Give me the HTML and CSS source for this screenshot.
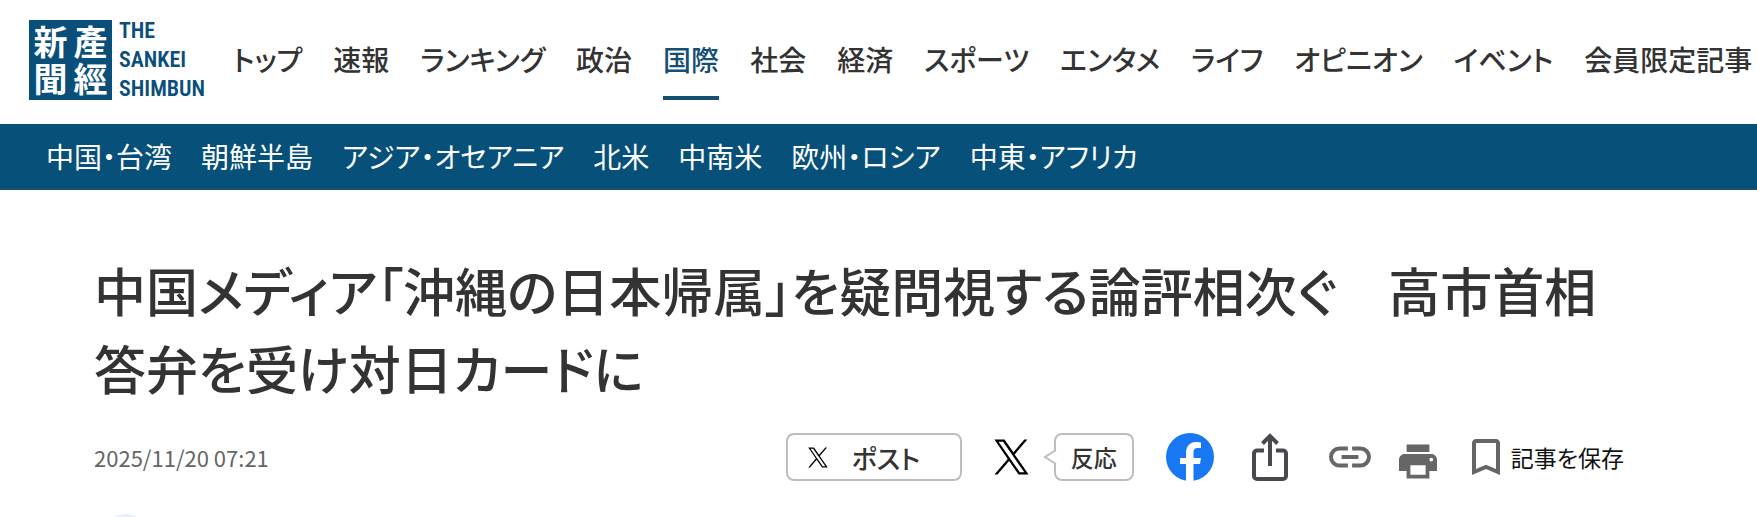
FILE: index.html
```
<!DOCTYPE html>
<html lang="ja">
<head>
<meta charset="utf-8">
<meta name="viewport" content="width=device-width, initial-scale=1">
<title>産経ニュース</title>
<link rel="stylesheet" href="styles.css">
</head>
<body>
<header class="header">
  <a class="logo" href="#">
    <span class="logo-seal"><span>產經</span><span>新聞</span></span>
    <span class="logo-name"><span>THE</span><span>SANKEI</span><span>SHIMBUN</span></span>
  </a>
  <nav class="nav">
    <a href="#">トップ</a>
    <a href="#">速報</a>
    <a href="#">ランキング</a>
    <a href="#">政治</a>
    <a class="current" href="#">国際</a>
    <a href="#">社会</a>
    <a href="#">経済</a>
    <a href="#">スポーツ</a>
    <a href="#">エンタメ</a>
    <a href="#">ライフ</a>
    <a href="#">オピニオン</a>
    <a href="#">イベント</a>
    <a href="#">会員限定記事</a>
  </nav>
</header>
<nav class="subnav">
  <a href="#">中国・台湾</a>
  <a href="#">朝鮮半島</a>
  <a href="#">アジア・オセアニア</a>
  <a href="#">北米</a>
  <a href="#">中南米</a>
  <a href="#">欧州・ロシア</a>
  <a href="#">中東・アフリカ</a>
</nav>
<main class="article">
  <h1 class="title">中国メディア「沖縄の日本帰属」を疑問視する論評相次ぐ　高市首相答弁を受け対日カードに</h1>
  <div class="meta">
    <time class="date" datetime="2025-11-20T07:21">2025/11/20 07:21</time>
    <div class="actions">
      <button class="post" type="button">
        <svg class="x-small" viewBox="0 0 24 24"><path d="M14.2 10.2 22.9 0h-2.1l-7.5 8.8L7.2 0H.3l9.1 13.3L.3 24h2.1l8-9.3 6.4 9.3h6.9zm-2.8 3.3-.9-1.3L3.1 1.6h3.1l6 8.5.9 1.4 7.7 11h-3.1z"/></svg>
        <span>ポスト</span>
      </button>
      <div class="reaction">
        <a href="#" aria-label="X"><svg class="x-large" viewBox="0 0 24 24"><path d="M14.2 10.2 22.9 0h-2.1l-7.5 8.8L7.2 0H.3l9.1 13.3L.3 24h2.1l8-9.3 6.4 9.3h6.9zm-2.8 3.3-.9-1.3L3.1 1.6h3.1l6 8.5.9 1.4 7.7 11h-3.1z"/></svg></a>
        <button class="bubble" type="button">
          <svg class="bubble-tail" viewBox="0 0 14 16"><path d="M13 1 2 8l11 7" fill="#fff" stroke="#bdbdbd" stroke-width="2"/></svg>
          反応
        </button>
      </div>
      <a class="facebook" href="#" aria-label="Facebook">
        <svg viewBox="0 0 48 48"><circle cx="24" cy="24" r="24" fill="#1877f2"/><path d="M20 48V31h-6v-6h6v-5c0-7 4-11 10-11 2 0 4 .2 5 .5V15h-3c-3.500 0-4.500 2-4.500 4.500V25H35l-1 6h-6.500v17z" fill="#fff"/></svg>
      </a>
      <button class="share" type="button" aria-label="共有">
        <svg viewBox="0 0 36 48" fill="none" stroke="#48484e" stroke-width="4"><path d="M12 17.500H5a3 3 0 0 0-3 3V43a3 3 0 0 0 3 3h26a3 3 0 0 0 3-3V20.500a3 3 0 0 0-3-3h-7"/><path d="M18 33V3M10.500 10.500 18 3l7.500 7.500"/></svg>
      </button>
      <button class="link" type="button" aria-label="リンクをコピー">
        <svg viewBox="2 7 20 10" fill="#666"><path d="M3.900 12c0-1.710 1.390-3.100 3.100-3.100h4V7H7a5 5 0 0 0 0 10h4v-1.900H7c-1.710 0-3.100-1.390-3.100-3.100zM8 13h8v-2H8v2zm9-6h-4v1.900h4a3.100 3.100 0 0 1 0 6.200h-4V17h4a5 5 0 0 0 0-10z"/></svg>
      </button>
      <button class="print" type="button" aria-label="印刷">
        <svg viewBox="2 3 20 18" fill="#666"><path d="M19 8H5c-1.660 0-3 1.340-3 3v6h4v4h12v-4h4v-6c0-1.660-1.340-3-3-3zm-3 11H8v-5h8v5zm3-7a1 1 0 1 1 0-2 1 1 0 0 1 0 2zM18 3H6v4h12V3z"/></svg>
      </button>
      <button class="save" type="button">
        <svg viewBox="5 3 14 18" fill="#666"><path d="M17 3H7c-1.100 0-2 .9-2 2v16l7-3 7 3V5c0-1.100-.9-2-2-2zm0 15-5-2.180L7 18V5h10v13z"/></svg>
        <span>記事を保存</span>
      </button>
    </div>
  </div>
  <div class="avatar"></div>
</main>
</body>
</html>
```
FILE: styles.css
```
* {
  box-sizing: border-box;
}

html {
  overflow: hidden;
}

body {
  margin: 0;
  background: #fff;
  color: #333;
  font-family: "Noto Sans CJK JP", sans-serif;
  font-feature-settings: "palt";
}

a {
  color: inherit;
  text-decoration: none;
}

button {
  display: flex;
  align-items: center;
  padding: 0;
  border: 0;
  background: none;
  color: inherit;
  font: inherit;
  font-feature-settings: inherit;
}

svg {
  display: block;
}

.header {
  display: flex;
  align-items: center;
  height: 124px;
  padding-left: 29px;
  padding-bottom: 4px;
  overflow: hidden;
}

.logo {
  display: flex;
  flex: none;
  gap: 7px;
  width: 204px;
  color: #0a4f79;
}

.logo-seal {
  display: flex;
  flex-direction: row-reverse;
  justify-content: center;
  gap: 6px;
  width: 83px;
  height: 80px;
  background: #0a4f79;
  color: #fff;
  font-size: 34px;
  font-weight: 700;
  line-height: 37px;
}

.logo-seal span {
  width: 34px;
  padding-top: 2px;
  word-break: break-all;
}

.logo-name {
  display: flex;
  flex-direction: column;
  justify-content: space-between;
  font-family: "Roboto Condensed", "Liberation Sans Narrow", "Liberation Sans", sans-serif;
  font-size: 22px;
  font-weight: 600;
  line-height: 22px;
}

.nav {
  display: flex;
  gap: 31px;
  height: 80px;
  font-size: 28px;
  font-weight: 500;
  line-height: 78px;
  white-space: nowrap;
}

.nav .current {
  border-bottom: 4px solid #154f73;
  color: #154f73;
}

.subnav {
  display: flex;
  gap: 29px;
  height: 66px;
  padding-left: 46px;
  overflow: hidden;
  border-bottom: 2px solid #174f70;
  background: #065079;
  color: #fff;
  font-size: 28px;
  line-height: 64px;
  white-space: nowrap;
}

.article {
  padding: 61px 133px 0 94px;
}

.title {
  margin: 0;
  font-size: 52px;
  font-weight: 500;
  line-height: 78px;
}

.meta {
  display: flex;
  align-items: center;
  justify-content: space-between;
  height: 48px;
  margin-top: 26px;
}

.date {
  color: #666;
  font-size: 22px;
}

.actions {
  display: flex;
  align-items: center;
}

.post {
  gap: 24px;
  width: 176px;
  height: 48px;
  padding-left: 20px;
  border: 2px solid #bdbdbd;
  border-radius: 8px;
  font-size: 26px;
  font-weight: 500;
}

.x-small {
  width: 20px;
  height: 21px;
}

.reaction {
  display: flex;
  align-items: center;
  gap: 25px;
  margin-left: 32px;
}

.x-large {
  width: 35px;
  height: 36px;
}

.bubble {
  position: relative;
  justify-content: center;
  width: 80px;
  height: 48px;
  border: 2px solid #bdbdbd;
  border-radius: 8px;
  font-size: 23px;
  font-weight: 500;
}

.bubble-tail {
  position: absolute;
  top: 14px;
  left: -13px;
  width: 14px;
  height: 16px;
}

.facebook {
  margin-left: 32px;
}

.facebook svg {
  width: 48px;
  height: 48px;
}

.share {
  margin-left: 38px;
}

.share svg {
  width: 36px;
  height: 48px;
}

.link {
  margin-left: 41px;
}

.link svg {
  width: 42px;
  height: 22px;
}

.print {
  margin-left: 28px;
  padding-top: 8px;
}

.print svg {
  width: 38px;
  height: 35px;
}

.save {
  gap: 11px;
  margin-left: 35px;
  color: #111;
  font-size: 23px;
}

.save svg {
  width: 28px;
  height: 36px;
}

.avatar {
  width: 48px;
  height: 48px;
  margin: 33px 0 0 8px;
  border-radius: 50%;
  background: #e9eef4;
}
```
